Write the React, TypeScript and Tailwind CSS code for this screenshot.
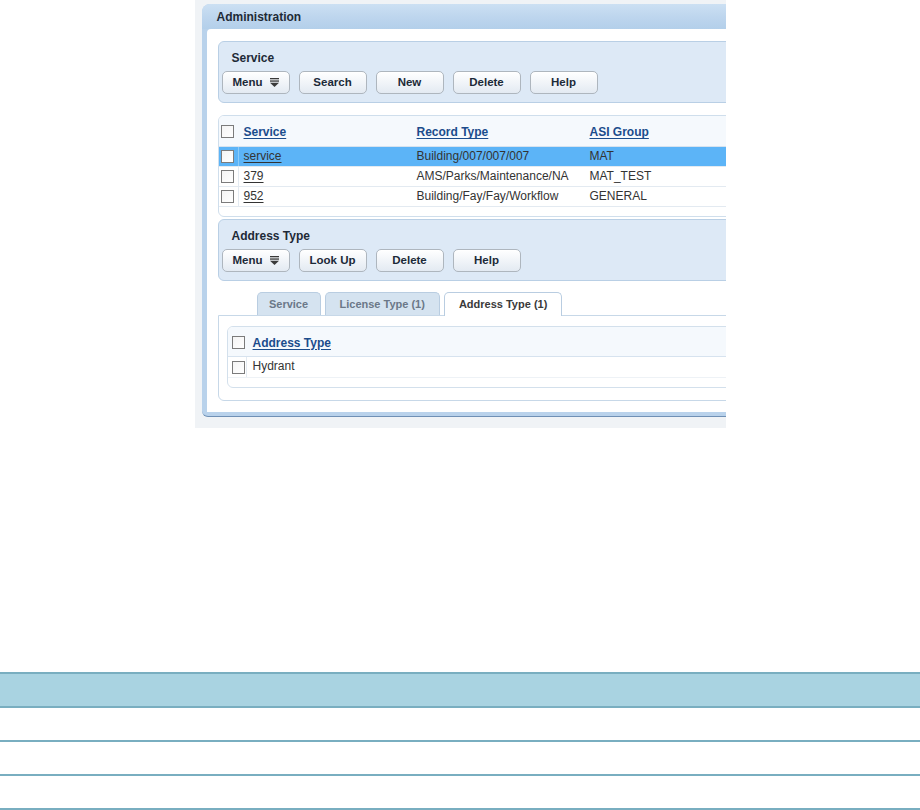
import React from "react";

const font = "font-['Liberation_Sans',Arial,sans-serif]";

const MenuIcon = () => (
  <svg width="9" height="9" viewBox="0 0 9 9" className="ml-[7px]">
    <rect x="0" y="0" width="9" height="1.3" fill="#3a3a3a" />
    <rect x="0" y="2.4" width="9" height="1.3" fill="#3a3a3a" />
    <polygon points="0,4.8 9,4.8 4.5,9" fill="#3a3a3a" />
  </svg>
);

const Btn: React.FC<{ label: string; menu?: boolean }> = ({ label, menu }) => (
  <button
    type="button"
    className="flex h-[23px] w-[68px] items-center justify-center rounded-[5px] border border-[#aeb6be] bg-gradient-to-b from-white to-[#e3eaf2] text-[11.5px] font-bold text-[#1c2a38] shadow-[inset_0_1px_0_#fff]"
  >
    {label}
    {menu && <MenuIcon />}
  </button>
);

const Check = () => (
  <span className="block h-[13px] w-[13px] border border-[#7b7b7b] bg-gradient-to-br from-[#f4f4f4] to-white" />
);

const Section: React.FC<{ title: string; buttons: string[] }> = ({
  title,
  buttons,
}) => (
  <div className="rounded-[6px] border border-[#b9cfe5] bg-[#dde9f6] pb-[8px] pl-[3px] pt-[9px]">
    <div className="pl-[10px] text-[12px] font-bold leading-[14px] text-[#1e2a36]">
      {title}
    </div>
    <div className="mt-[6px] flex gap-[9px]">
      <Btn label="Menu" menu />
      {buttons.map((b) => (
        <Btn key={b} label={b} />
      ))}
    </div>
  </div>
);

const serviceRows = [
  { id: "service", type: "Building/007/007/007", group: "MAT", selected: true },
  { id: "379", type: "AMS/Parks/Maintenance/NA", group: "MAT_TEST" },
  { id: "952", type: "Building/Fay/Fay/Workflow", group: "GENERAL" },
];

const headLink =
  "text-[12px] font-bold text-[#1b4c8c] underline underline-offset-2";

const ServiceList = () => (
  <div className="mt-[12px] overflow-hidden rounded-[6px] border border-[#cfdeec] bg-white">
    <div className="grid h-[31px] grid-cols-[20px_173px_173px_1fr] items-center border-b border-[#d7e3ef] bg-[#f5f9fd]">
      <div className="pl-[2px]">
        <Check />
      </div>
      <div className="pl-[5px]">
        <span className={headLink}>Service</span>
      </div>
      <div className="pl-[5px]">
        <span className={headLink}>Record Type</span>
      </div>
      <div className="pl-[5px]">
        <span className={headLink}>ASI Group</span>
      </div>
    </div>
    {serviceRows.map((r) => (
      <div
        key={r.id}
        className={`grid h-[20px] grid-cols-[20px_173px_173px_1fr] items-center border-b border-[#e3eaf1] text-[12px] text-[#333] ${
          r.selected ? "bg-[#5cb4f7]" : "bg-white"
        }`}
      >
        <div
          className={`flex h-full items-center border-r pl-[2px] ${
            r.selected ? "border-[#8ccbf9]" : "border-[#e3eaf1]"
          }`}
        >
          <Check />
        </div>
        <div className="pb-[1px] pl-[5px]">
          <span className="underline underline-offset-2">{r.id}</span>
        </div>
        <div className="pb-[1px] pl-[5px]">{r.type}</div>
        <div className="pb-[1px] pl-[5px]">{r.group}</div>
      </div>
    ))}
    <div className="h-[9px]" />
  </div>
);

const Tab: React.FC<{ label: string; active?: boolean }> = ({ label, active }) => (
  <div
    className={`flex h-[24px] items-center justify-center rounded-t-[5px] border border-b-0 px-[14px] text-[11px] font-bold ${
      active
        ? "relative z-10 border-[#b9cde1] bg-white text-[#3a3a3a]"
        : "border-[#b9cde1] bg-[#d5e3f0] text-[#6b7888]"
    }`}
  >
    {label}
  </div>
);

const AddressTabs = () => (
  <div className="mt-[11px]">
    <div className="flex gap-[4px] pl-[39px]">
      <div className="w-[64px]">
        <Tab label="Service" />
      </div>
      <Tab label="License Type (1)" />
      <Tab label="Address Type (1)" active />
    </div>
    <div className="relative -mt-px rounded-b-[6px] border border-[#c7d8e8] bg-white pb-[12px] pl-[8px] pt-[10px]">
      <div className="overflow-hidden rounded-[6px] border border-[#d3e0ec]">
        <div className="flex h-[30px] items-center border-b border-[#d7e3ef] bg-[#f5f9fd]">
          <div className="w-[19px] pl-[4px] pt-[2px]">
            <Check />
          </div>
          <div className="pl-[6px]">
            <span className={headLink}>Address Type</span>
          </div>
        </div>
        <div className="flex h-[21px] items-center border-b border-[#eef2f6] text-[12px] text-[#333]">
          <div className="flex h-full w-[19px] items-center border-r border-[#e3eaf1] pl-[4px] pt-[1px]">
            <Check />
          </div>
          <div className="pb-[3px] pl-[6px]">Hydrant</div>
        </div>
        <div className="h-[9px]" />
      </div>
    </div>
  </div>
);

export default function App() {
  return (
    <div className={`min-h-[810px] bg-white ${font}`}>
      <div className="mx-auto h-[428px] w-[531px] overflow-hidden bg-[#f0f3f6] pl-[7px] pt-[4px]">
        <div className="w-[600px] overflow-hidden rounded-tl-[8px] rounded-bl-[6px] border-b border-[#6f90b5] bg-[#b9d2eb]">
          <div className="flex h-[25px] items-center bg-gradient-to-b from-[#cce0f3] via-[#bed6ee] to-[#b3cfea] pl-[15px] text-[12px] font-bold text-[#1e2a36]">
            Administration
          </div>
          <div className="mb-[4px] ml-[5px] rounded-tl-[4px] bg-white pb-[11px] pl-[11px] pt-[12px]">
            <Section title="Service" buttons={["Search", "New", "Delete", "Help"]} />
            <ServiceList />
            <div className="mt-[2px]">
              <Section title="Address Type" buttons={["Look Up", "Delete", "Help"]} />
            </div>
            <AddressTabs />
          </div>
        </div>
      </div>

      <table className="mt-[244px] w-full border-collapse">
        <thead>
          <tr className="h-[34px] border-y-2 border-[#79aec0] bg-[#a9d3e1]">
            <th />
          </tr>
        </thead>
        <tbody>
          {[0, 1, 2].map((i) => (
            <tr key={i} className="h-[34px] border-b-2 border-[#79aec0] bg-white">
              <td />
            </tr>
          ))}
        </tbody>
      </table>
    </div>
  );
}
